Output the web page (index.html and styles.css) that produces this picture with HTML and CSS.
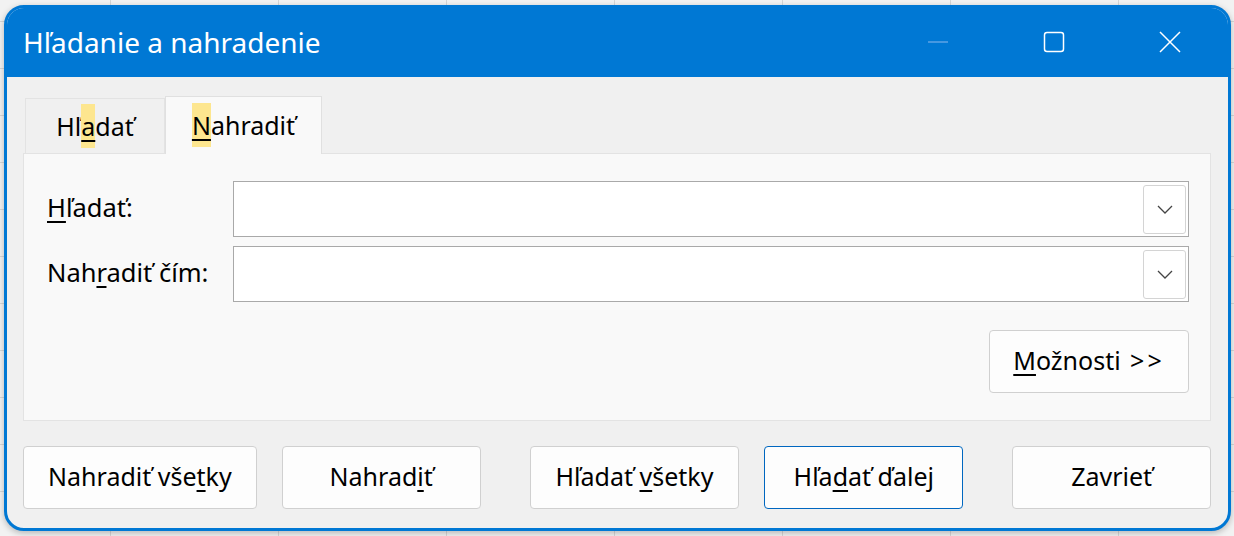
FILE: index.html
```html
<!DOCTYPE html>
<html lang="sk">
<head>
  <meta charset="UTF-8">
  <title>Hľadanie a nahradenie</title>
  <link rel="stylesheet" href="styles.css">
</head>
<body>
  <div class="window">
    <div class="titlebar">
      <div class="title">Hľadanie a nahradenie</div>
      <div class="controls">
        <div class="ctrl">
          <svg width="22" height="22" viewBox="0 0 22 22"><line x1="1" y1="11" x2="21" y2="11" stroke="#5ea3e6" stroke-width="1.4"/></svg>
        </div>
        <div class="ctrl">
          <svg width="22" height="22" viewBox="0 0 22 22"><rect x="1.5" y="1.5" width="19" height="19" rx="2.5" fill="none" stroke="#fff" stroke-width="1.5"/></svg>
        </div>
        <div class="ctrl">
          <svg width="22" height="22" viewBox="0 0 22 22"><path d="M1 1 L21 21 M21 1 L1 21" stroke="#fff" stroke-width="1.5"/></svg>
        </div>
      </div>
    </div>

    <div class="content">
      <div class="tabs">
        <div class="tab">Hľ<span class="hint"><u>a</u></span>dať</div>
        <div class="tab active"><span class="hint"><u>N</u></span>ahradiť</div>
      </div>

      <div class="panel">
        <div class="row">
          <label class="label"><u>H</u>ľadať:</label>
          <div class="combo">
            <div class="drop">
              <svg width="16" height="9" viewBox="0 0 16 9"><path d="M1 1 L8 8 L15 1" fill="none" stroke="#444" stroke-width="1.3"/></svg>
            </div>
          </div>
        </div>
        <div class="row">
          <label class="label">Nah<u>r</u>adiť čím:</label>
          <div class="combo">
            <div class="drop">
              <svg width="16" height="9" viewBox="0 0 16 9"><path d="M1 1 L8 8 L15 1" fill="none" stroke="#444" stroke-width="1.3"/></svg>
            </div>
          </div>
        </div>
        <div class="options-row">
          <button class="btn options"><u>M</u>ožnosti <span class="arrows">&gt;&gt;</span></button>
        </div>
      </div>

      <div class="buttons">
        <button class="btn w234">Nahradiť vše<u>t</u>ky</button>
        <button class="btn w199 gap25">Nahrad<u>i</u>ť</button>
        <button class="btn w210 gap49">Hľadať <u>v</u>šetky</button>
        <button class="btn w199 gap25 focus">Hľa<u>d</u>ať ďalej</button>
        <button class="btn w199 gap49">Zavrieť</button>
      </div>
    </div>
  </div>
</body>
</html>
```

FILE: styles.css
```css
body {
  margin: 0;
  padding: 5px 0 0 4px;
  width: 1234px;
  height: 536px;
  box-sizing: border-box;
  overflow: hidden;
  font-family: "Noto Sans", "Liberation Sans", sans-serif;
  background-color: #f2f2f2;
  background-image:
    linear-gradient(to right, #d6d6d6 1px, transparent 1px),
    linear-gradient(to bottom, #d6d6d6 1px, transparent 1px);
  background-size: 168px 47px;
  background-position: 110px 21px;
}
.window {
  width: 1227px;
  height: 526px;
  box-sizing: border-box;
  border: 3px solid #0078d4;
  border-radius: 20px;
  background: #f0f0f0;
  overflow: hidden;
  box-shadow: 0 2px 6px rgba(0,0,0,0.25);
}
.titlebar {
  height: 69px;
  background: #0078d4;
  display: flex;
  align-items: center;
  color: white;
}
.title {
  flex: 1;
  padding-left: 16px;
  font-size: 28px;
  padding-bottom: 2px;
}
.controls {
  display: flex;
  height: 100%;
}
.ctrl {
  width: 116px;
  display: flex;
  align-items: center;
  justify-content: center;
  padding-bottom: 2px;
}
.content {
  padding: 19px 17px 0 16px;
}
.tabs {
  display: flex;
  align-items: flex-start;
  height: 58px;
  margin-bottom: -1px;
  position: relative;
  z-index: 1;
}
.tab {
  width: 140px;
  height: 55px;
  box-sizing: border-box;
  margin-left: 2px;
  margin-top: 2px;
  border: 1px solid #e3e3e3;
  border-bottom: none;
  background: #f0f0f0;
  display: flex;
  align-items: center;
  justify-content: center;
  font-size: 25px;
  color: #000;
}
.tab.active {
  width: 157px;
  height: 58px;
  margin-left: 0;
  margin-top: 0;
  background: #f9f9f9;
  border-color: #e0e0e0;
  padding-bottom: 1px;
}
.hint {
  display: inline-block;
  background: #fde68f;
  line-height: 44px;
}
u {
  text-underline-offset: 4px;
  text-decoration-thickness: 1.5px;
}
.panel {
  height: 268px;
  box-sizing: border-box;
  border: 1px solid #e3e3e3;
  background: #f9f9f9;
  padding: 27px 21px 0 23px;
}
.row {
  display: flex;
  align-items: center;
  height: 56px;
  margin-bottom: 9px;
}
.label {
  width: 186px;
  font-size: 25.5px;
  color: #000;
  padding-bottom: 4px;
}
.combo {
  flex: 1;
  height: 56px;
  box-sizing: border-box;
  border: 1px solid #a9a9a9;
  background: white;
  display: flex;
  justify-content: flex-end;
  align-items: center;
  padding-right: 2px;
}
.drop {
  width: 43px;
  height: 49px;
  box-sizing: border-box;
  border: 1px solid #d4d4d4;
  border-radius: 3px;
  display: flex;
  align-items: center;
  justify-content: center;
}
.options-row {
  display: flex;
  justify-content: flex-end;
  padding-top: 19px;
}
.btn {
  height: 63px;
  box-sizing: border-box;
  border: 1px solid #d0d0d0;
  border-radius: 4px;
  background: #fdfdfd;
  font-family: "Noto Sans", "Liberation Sans", sans-serif;
  font-size: 25px;
  color: #000;
  padding: 0 0 4px;
}
.options {
  width: 200px;
}
.arrows {
  letter-spacing: 3px;
  margin-left: 3px;
}
.buttons {
  display: flex;
  padding-top: 25px;
}
.w234 { width: 234px; }
.w199 { width: 199px; }
.w210 { width: 210px; }
.gap25 { margin-left: 25px; }
.gap49 { margin-left: 49px; }
.focus {
  border-color: #0067c0;
}
```
